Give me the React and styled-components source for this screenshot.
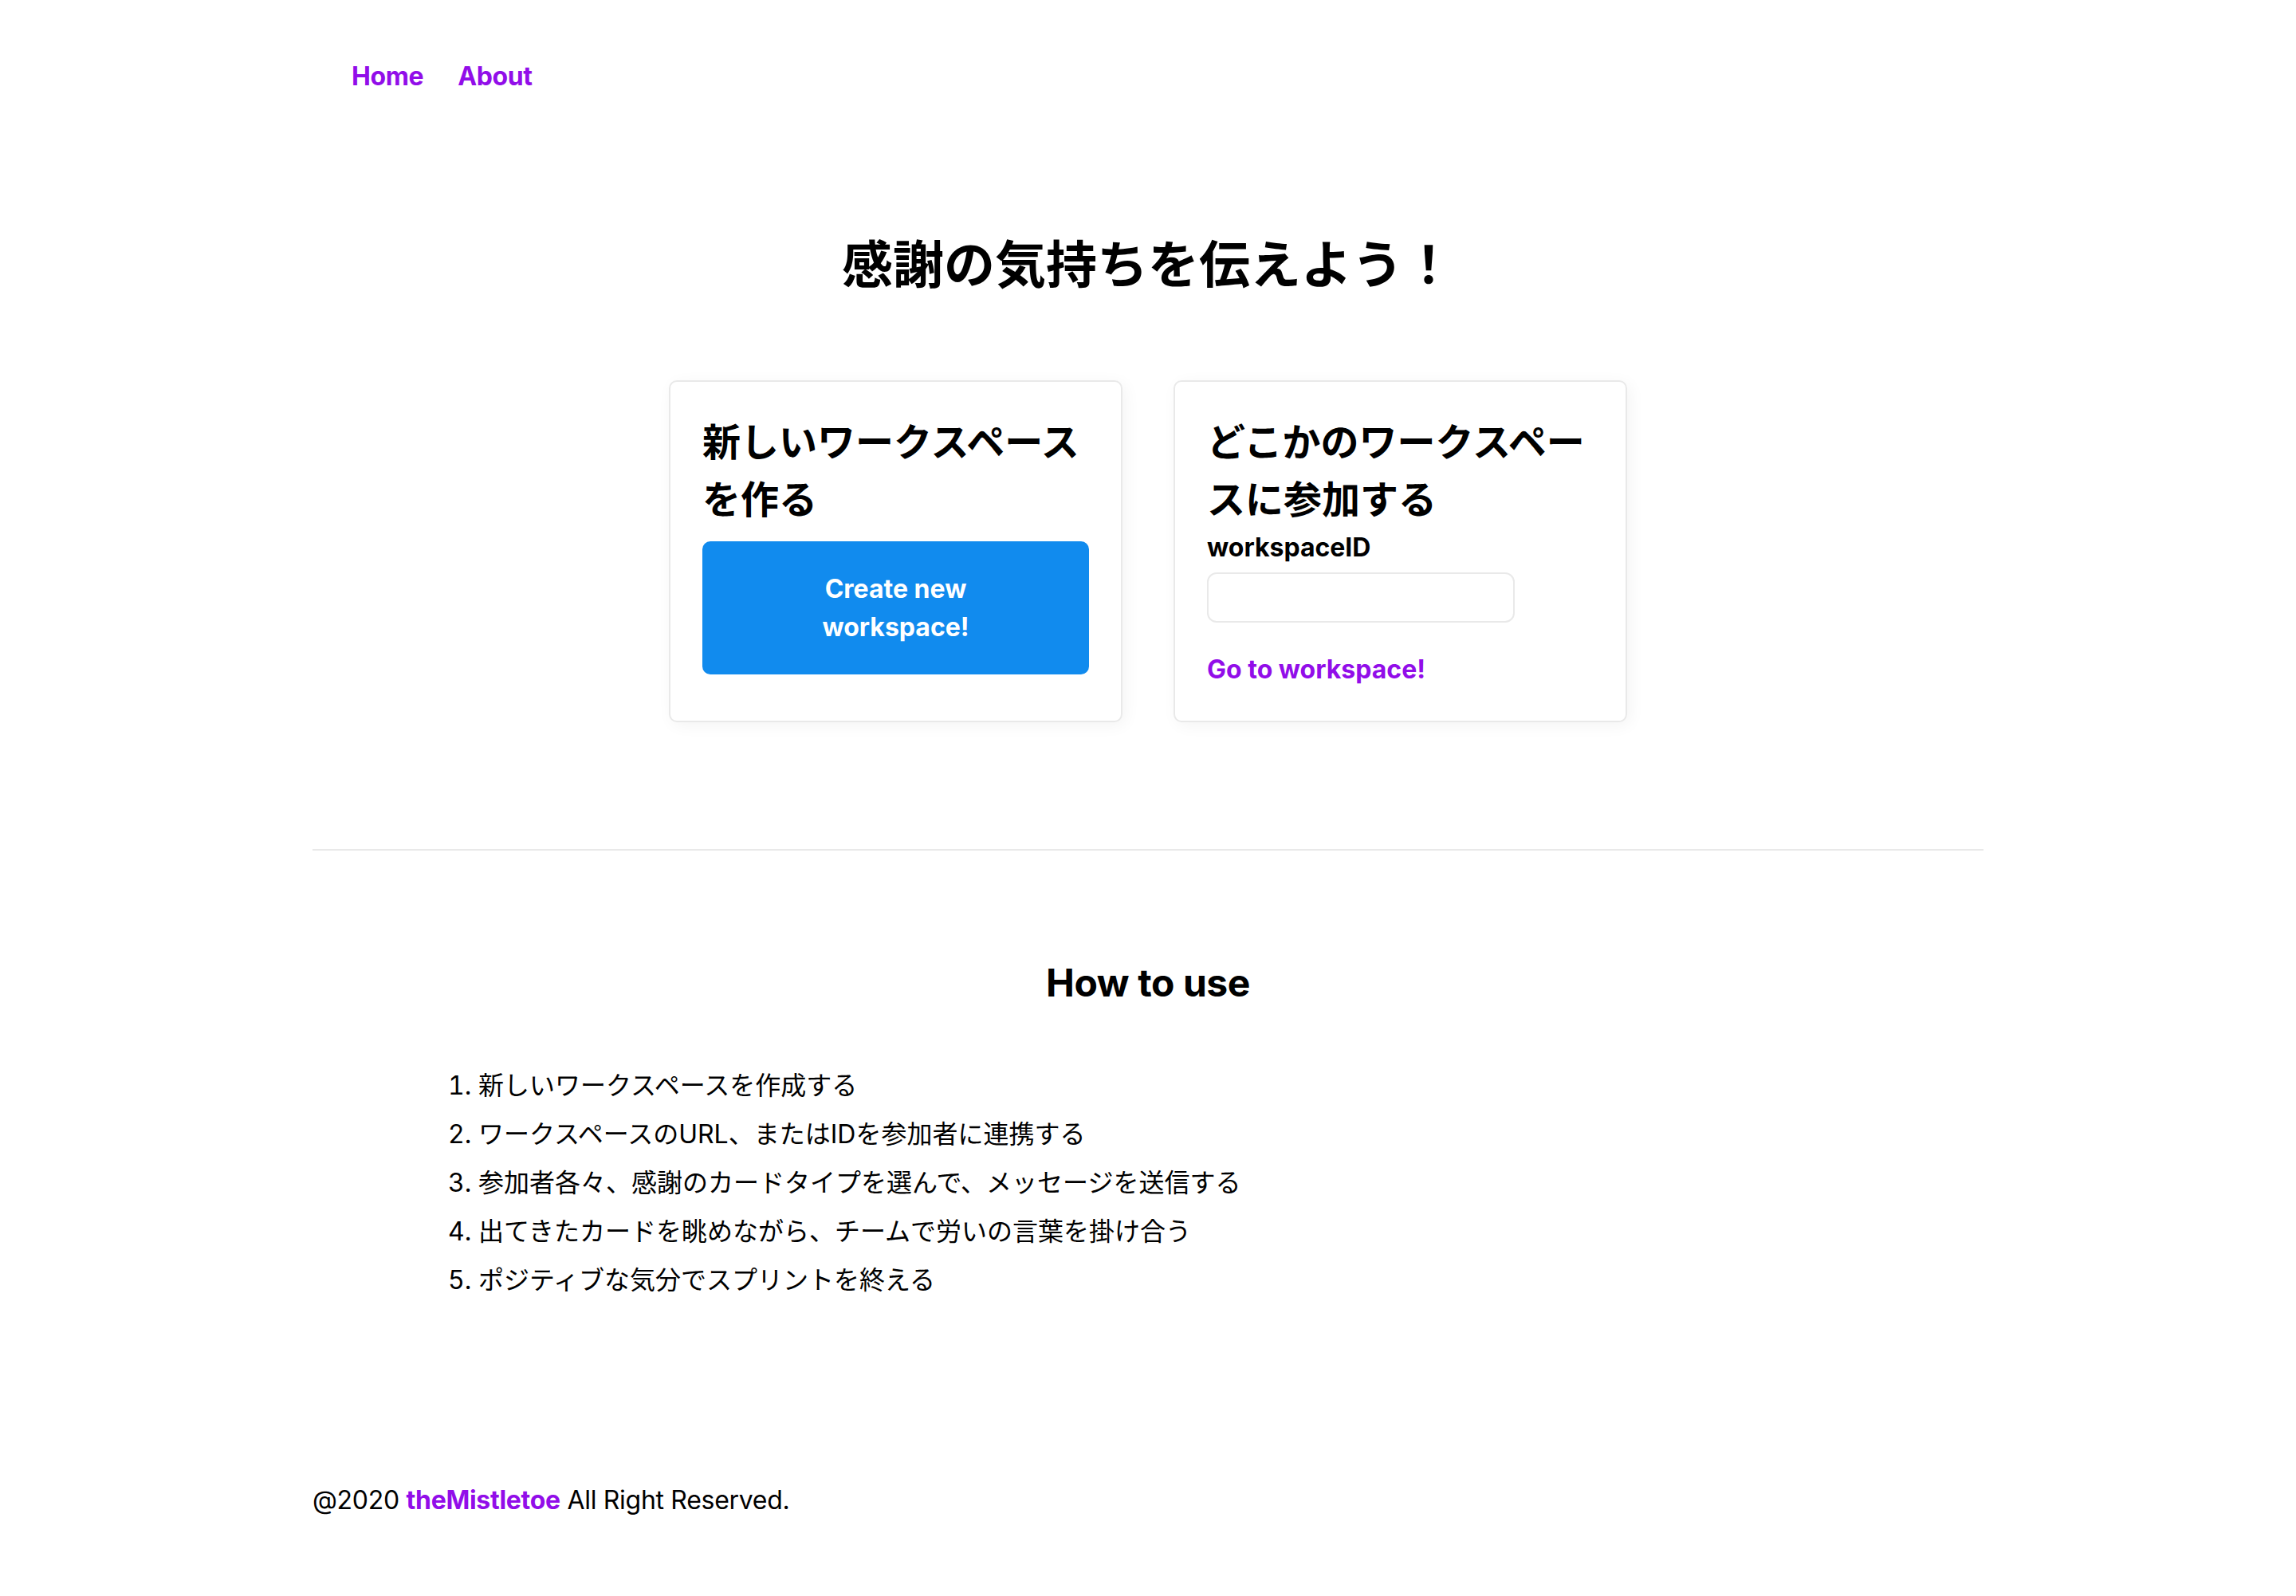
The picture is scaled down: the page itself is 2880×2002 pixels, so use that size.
import React from "react";
import styled, { createGlobalStyle } from "styled-components";

const GlobalStyle = createGlobalStyle`
  html, body {
    margin: 0;
    padding: 0;
    background: #fff;
  }
  body {
    font-family: Inter, "Noto Sans CJK JP", sans-serif;
    color: #000;
    font-size: 32px;
    line-height: 48px;
  }
  * { box-sizing: border-box; }
`;

const Page = styled.div`
  width: 100%;
  min-height: 2002px;
  display: flex;
  flex-direction: column;
`;

const Header = styled.header`
  width: 2096px;
  margin: 0 auto;
  padding-top: 72px;
`;

const Nav = styled.nav`
  display: flex;
  gap: 43px;
  padding-left: 49px;
  font-weight: 700;
  letter-spacing: -0.4px;
`;

const NavLink = styled.a`
  color: #920de9;
  text-decoration: none;
  font-size: 32px;
  line-height: 48px;
`;

const Main = styled.main`
  width: 2096px;
  margin: 0 auto;
  display: flex;
  flex-direction: column;
`;

const Title = styled.h1`
  margin: 164px 0 0;
  text-align: center;
  font-size: 64px;
  line-height: 96px;
  font-weight: 700;
`;

const CardRow = styled.section`
  display: flex;
  justify-content: center;
  gap: 64px;
  margin-top: 97px;
`;

const Card = styled.aside`
  width: 569px;
  border: 2px solid #e9e9e9;
  border-radius: 10px;
  padding: 40px;
  box-shadow: 4px 4px 20px #f4f4f4;
  display: flex;
  flex-direction: column;
  align-items: flex-start;
`;

const CardTitle = styled.h2`
  margin: 0;
  font-size: 48px;
  line-height: 72px;
  font-weight: 700;
`;

const PrimaryButton = styled.button`
  margin: 16px 0;
  width: 100%;
  background: #118bee;
  color: #fff;
  border: 2px solid #118bee;
  border-radius: 10px;
  padding: 34px 64px 33px;
  font-family: inherit;
  font-size: 32px;
  line-height: 48px;
  font-weight: 700;
  cursor: pointer;
`;

const Label = styled.label`
  display: block;
  font-weight: 700;
  font-size: 32px;
  line-height: 48px;
`;

const TextInput = styled.input`
  margin-top: 7px;
  width: 386px;
  height: 63px;
  border: 2px solid #e9e9e9;
  border-radius: 12px;
  padding: 0 16px;
  font-family: inherit;
  font-size: 32px;
  outline: none;
`;

const TextLink = styled.a`
  margin-top: 35px;
  color: #920de9;
  font-weight: 700;
  text-decoration: none;
  font-size: 32px;
  line-height: 48px;
`;

const Divider = styled.hr`
  margin: 159px 0 0;
  border: none;
  height: 2px;
  background: #e9e9e9;
`;

const SectionTitle = styled.h2`
  margin: 130px 0 0;
  text-align: center;
  font-size: 48px;
  line-height: 72px;
  font-weight: 700;
  letter-spacing: -0.4px;
`;

const Steps = styled.ol`
  margin: 63px 0 0;
  padding-left: 208px;
`;

const Step = styled.li`
  padding: 6.4px 0;
  font-size: 32px;
  line-height: 48px;
`;

const Footer = styled.footer`
  width: 2096px;
  margin: 222px auto 0;
  font-size: 32px;
  line-height: 48px;
  letter-spacing: -0.3px;
`;

const FooterLink = styled.a`
  color: #920de9;
  font-weight: 700;
  text-decoration: none;
`;

const steps = [
  "新しいワークスペースを作成する",
  "ワークスペースのURL、またはIDを参加者に連携する",
  "参加者各々、感謝のカードタイプを選んで、メッセージを送信する",
  "出てきたカードを眺めながら、チームで労いの言葉を掛け合う",
  "ポジティブな気分でスプリントを終える",
];

export default function App() {
  return (
    <Page>
      <GlobalStyle />
      <Header>
        <Nav>
          <NavLink href="#">Home</NavLink>
          <NavLink href="#">About</NavLink>
        </Nav>
      </Header>
      <Main>
        <Title>感謝の気持ちを伝えよう！</Title>
        <CardRow>
          <Card>
            <CardTitle>新しいワークスペースを作る</CardTitle>
            <PrimaryButton>Create new workspace!</PrimaryButton>
          </Card>
          <Card>
            <CardTitle>どこかのワークスペースに参加する</CardTitle>
            <Label htmlFor="wid">workspaceID</Label>
            <TextInput id="wid" type="text" />
            <TextLink href="#">Go to workspace!</TextLink>
          </Card>
        </CardRow>
        <Divider />
        <SectionTitle>How to use</SectionTitle>
        <Steps>
          {steps.map((s) => (
            <Step key={s}>{s}</Step>
          ))}
        </Steps>
      </Main>
      <Footer>
        @2020 <FooterLink href="#">theMistletoe</FooterLink> All Right Reserved.
      </Footer>
    </Page>
  );
}
